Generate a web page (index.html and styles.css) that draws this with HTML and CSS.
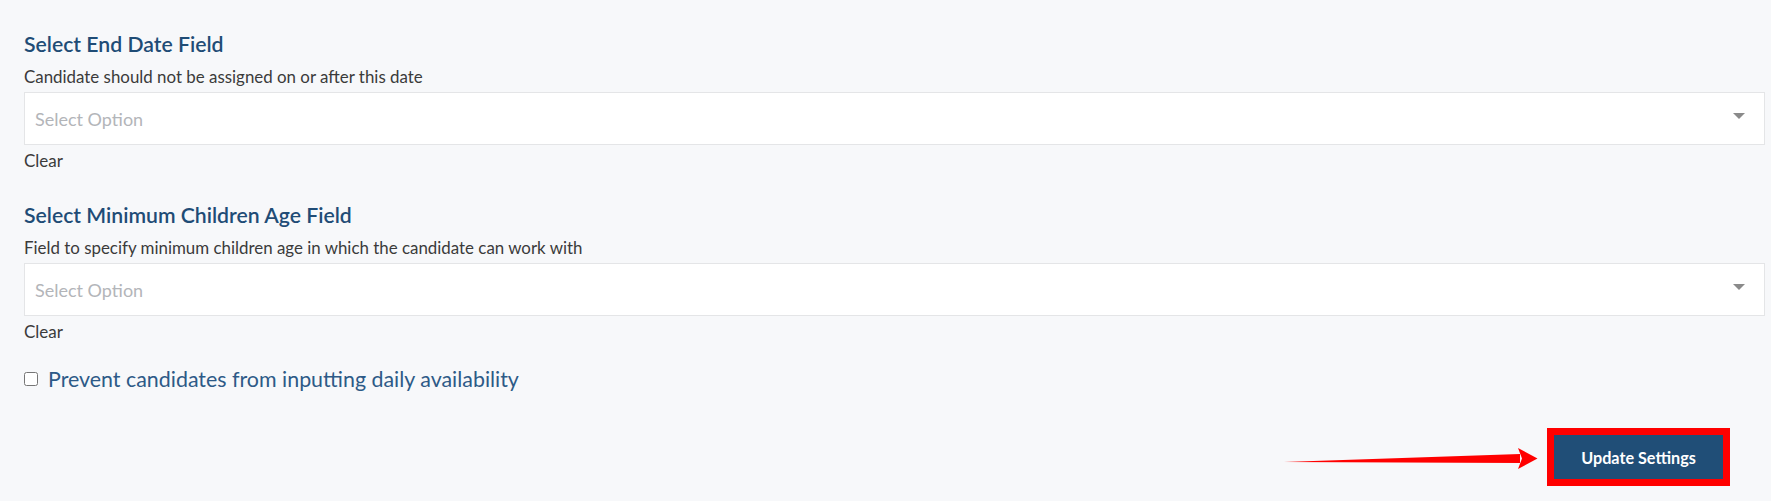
FILE: index.html
```html
<!DOCTYPE html>
<html>
<head>
<meta charset="utf-8">
<link rel="stylesheet" href="styles.css">
</head>
<body>
<div class="page">
  <section class="field-group first">
    <h2 class="field-title">Select End Date Field</h2>
    <p class="field-desc">Candidate should not be assigned on or after this date</p>
    <div class="select-box">
      <span class="placeholder">Select Option</span>
      <span class="caret"></span>
    </div>
    <a class="clear-link">Clear</a>
  </section>
  <section class="field-group">
    <h2 class="field-title">Select Minimum Children Age Field</h2>
    <p class="field-desc">Field to specify minimum children age in which the candidate can work with</p>
    <div class="select-box">
      <span class="placeholder">Select Option</span>
      <span class="caret"></span>
    </div>
    <a class="clear-link">Clear</a>
  </section>
  <label class="check-row">
    <input type="checkbox" class="check">
    <span class="check-label">Prevent candidates from inputting daily availability</span>
  </label>
  <div class="footer">
    <svg class="arrow" width="254" height="22" viewBox="0 0 254 22">
      <polygon points="0,14 236,6 236,15" fill="#ff0000"/>
      <polygon points="234,0 253.5,10.5 234,21 238,10.5" fill="#ff0000"/>
    </svg>
    <div class="highlight">
      <button class="btn-update">Update Settings</button>
    </div>
  </div>
</div>
</body>
</html>
```
FILE: styles.css
```css
html, body {
  margin: 0;
  padding: 0;
  background: #f7f8fa;
}
body {
  font-family: "Lato", "Noto Sans", sans-serif;
  color: #333;
}
.page {
  padding: 31px 6px 0 24px;
}
.field-group {
  display: flex;
  flex-direction: column;
}
.field-group + .field-group {
  margin-top: 30px;
}
.field-title {
  margin: 0;
  font-size: 21.2px;
  line-height: 26px;
  font-weight: 600;
  color: #1f4c76;
}
.field-desc {
  margin: 9px 0 0;
  font-size: 16.9px;
  line-height: 22px;
  color: #3b3b3b;
}
.select-box {
  box-sizing: border-box;
  margin-top: 4px;
  height: 53px;
  background: #fff;
  border: 1px solid #e4e5e7;
  display: flex;
  align-items: center;
  justify-content: space-between;
  padding: 0 19px 0 10px;
}
.placeholder {
  font-size: 18px;
  line-height: 22px;
  color: #b3b5b9;
}
.caret {
  width: 0;
  height: 0;
  margin-bottom: 5px;
  border-left: 6px solid transparent;
  border-right: 6px solid transparent;
  border-top: 6px solid #8a8a8a;
}
.clear-link {
  margin-top: 5px;
  font-size: 17px;
  line-height: 22px;
  color: #3b3b3b;
}
.check-row {
  display: flex;
  align-items: center;
  margin-top: 22px;
}
.check {
  margin: 0;
  width: 14px;
  height: 14px;
}
.check-label {
  margin-left: 10px;
  font-size: 21.4px;
  line-height: 28px;
  color: #2d5a87;
}
.footer {
  display: flex;
  align-items: center;
  justify-content: flex-end;
  margin-top: 35px;
  padding-right: 35px;
}
.arrow {
  display: block;
  margin-right: 9px;
  margin-top: 4px;
}
.highlight {
  border: 7px solid #ff0000;
}
.btn-update {
  display: block;
  width: 169px;
  height: 44px;
  border: 0;
  background: #204e77;
  color: #fff;
  font-family: "Lato", "Noto Sans", sans-serif;
  font-weight: 700;
  font-size: 16.2px;
  padding: 0;
}
```
